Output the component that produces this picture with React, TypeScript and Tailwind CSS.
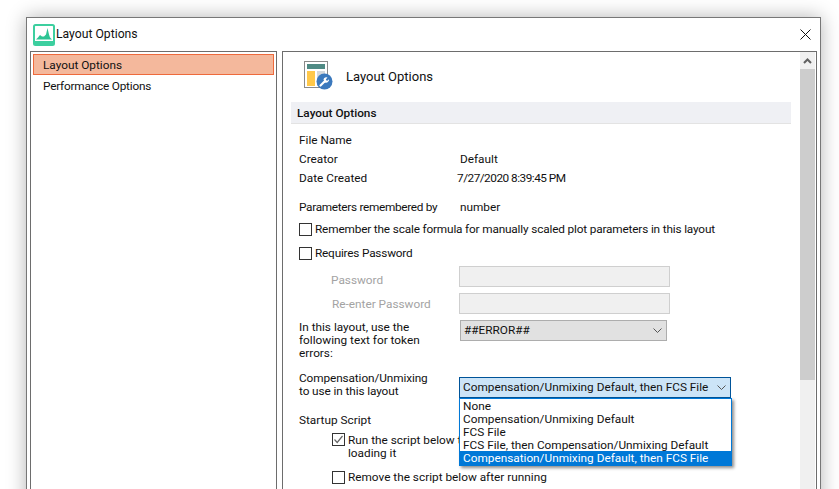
function Logo() {
  return (
    <svg width="22" height="22" viewBox="0 0 22 22" className="shrink-0">
      <rect x="1" y="1" width="20" height="20" rx="1.5" fill="#fff" stroke="#3ccf9f" strokeWidth="2" />
      <path d="M3 15.5 L5 13.5 L7 11 L9 12.5 L11 12.5 L13 10.5 L14.5 4 L16 10.5 L17 13.5 L19 15.5 Z" fill="#2cc493" />
      <rect x="2" y="17" width="18" height="3" fill="#3ccf9f" />
    </svg>
  );
}

function PageIcon() {
  return (
    <svg width="30" height="30" viewBox="0 0 30 30" className="shrink-0">
      <rect x="0.5" y="0.5" width="23" height="26" fill="#fff" stroke="#8a8a8a" />
      <rect x="3" y="3" width="18" height="5" fill="#4f8a84" />
      <rect x="3" y="10" width="8" height="15" fill="#ffc84a" />
      <rect x="13" y="10" width="8" height="15" fill="#d4d8dc" />
      <circle cx="20.5" cy="20.5" r="8" fill="#3b79bd" />
      <path d="M16.5 24.5 L20.5 20.5" fill="none" stroke="#fff" strokeWidth="2.2" strokeLinecap="round" />
      <path d="M19.5 18.5 A3 3 0 0 1 23.5 16.5 L21.8 18.6 L23 20 L25 18.2 A3 3 0 0 1 21 21.5 Z" fill="#fff" />
    </svg>
  );
}

function Chevron() {
  return (
    <svg width="9" height="5" viewBox="0 0 9 5" className="mr-[1px]">
      <path d="M0.5 0.5 L4.5 4.5 L8.5 0.5" fill="none" stroke="#555" strokeWidth="1" />
    </svg>
  );
}

function Checkbox({ checked }: { checked?: boolean }) {
  return (
    <span className="flex h-[13px] w-[13px] shrink-0 items-center justify-center border border-[#333] bg-white">
      {checked && (
        <svg width="11" height="11" viewBox="0 0 11 11">
          <path d="M1.5 5.5 L4.2 8.5 L9.5 2" fill="none" stroke="#666" strokeWidth="1.2" />
        </svg>
      )}
    </span>
  );
}

function Field({ label, labelClass, children }: { label: string; labelClass?: string; children?: React.ReactNode }) {
  return (
    <div className="flex h-[19px] items-center">
      <span className={`w-[161px] shrink-0 ${labelClass ?? ''}`}>{label}</span>
      {children}
    </div>
  );
}

function PasswordRow({ label, indent }: { label: string; indent: string }) {
  return (
    <div className="flex h-[21px] items-start">
      <span className={`w-[160px] shrink-0 text-[#a3a3a3] ${indent}`}>{label}</span>
      <div className="h-[21px] w-[211px] border border-[#cfcfcf] bg-[#f0f0f0]" />
    </div>
  );
}

const compOptions = [
  'None',
  'Compensation/Unmixing Default',
  'FCS File',
  'FCS File, then Compensation/Unmixing Default',
];

export default function App() {
  return (
    <div className="h-[489px] w-[839px] overflow-hidden bg-white pl-[26px] pt-[17px] font-['Roboto',sans-serif] text-[11.8px] leading-[13px] text-[#111]">
      <div className="h-[520px] w-[795px] border border-[#777] bg-white shadow-[0_0_18px_rgba(0,0,0,0.3)]">
        <div className="flex h-[33px] items-center pl-[6px] pr-[8px]">
          <Logo />
          <span className="ml-[1px] flex-1 text-[12.2px]">Layout Options</span>
          <svg width="11" height="11" viewBox="0 0 11 11" className="mr-[1px]">
            <path d="M0.5 0.5 L10.5 10.5 M10.5 0.5 L0.5 10.5" stroke="#111" strokeWidth="1" />
          </svg>
        </div>
        <div className="flex h-[480px] gap-[5px] pl-[3px]">
          <div className="w-[247px] border border-[#6d6d6d] p-[2px]">
            <div className="flex h-[21px] items-center border border-[#ee6a3c] bg-[#f4b89c] pl-[9px] pt-[1px]">Layout Options</div>
            <div className="flex h-[21px] items-center pl-[10px] pt-[1px] tracking-[-0.2px]">Performance Options</div>
          </div>
          <div className="flex w-[535px] border border-[#6d6d6d]">
            <div className="w-[516px] pl-[8px] pt-[9px]">
              <div className="flex h-[30px] items-center pl-[13px]">
                <PageIcon />
                <span className="ml-[12px] text-[13px]">Layout Options</span>
              </div>
              <div className="mt-[11px] flex h-[22px] w-[500px] items-center border-b border-[#e3e3e3] bg-[#eff0f4] pl-[6px] pt-[2px] font-medium">
                Layout Options
              </div>
              <div className="relative pl-[8px] pt-[7px]">
                <Field label="File Name" />
                <Field label="Creator"><span>Default</span></Field>
                <Field label="Date Created"><span className="-ml-[3px] tracking-[-0.5px]">7/27/2020 8:39:45 PM</span></Field>
                <div className="mt-[10px]">
                  <Field label="Parameters remembered by" labelClass="tracking-[-0.3px]"><span>number</span></Field>
                </div>
                <label className="mt-[1px] flex h-[22px] items-center gap-[3px]">
                  <Checkbox />
                  <span className="tracking-[-0.16px]">Remember the scale formula for manually scaled plot parameters in this layout</span>
                </label>
                <label className="mt-[2px] flex h-[22px] items-center gap-[3px]">
                  <Checkbox />
                  <span className="tracking-[-0.2px]">Requires Password</span>
                </label>
                <div className="mt-[2px] flex flex-col gap-[6px]">
                  <PasswordRow label="Password" indent="pl-[32px] pt-[8px]" />
                  <PasswordRow label="Re-enter Password" indent="pl-[33px] pt-[5px]" />
                </div>
                <div className="mt-[6px] flex items-start">
                  <span className="mt-[1px] w-[161px] shrink-0">In this layout, use the<br />following text for token<br />errors:</span>
                  <div className="flex h-[21px] w-[207px] items-center justify-between border border-[#adadad] bg-[#e1e1e1] pl-[3px] pr-[3px]">
                    <span>##ERROR##</span>
                    <Chevron />
                  </div>
                </div>
                <div className="mt-[17px] flex items-start">
                  <span className="-mt-[5px] w-[160px] shrink-0 tracking-[-0.1px]">Compensation/Unmixing<br />to use in this layout</span>
                  <div className="relative z-10 w-[272px]">
                    <div className="flex h-[21px] items-center justify-between border border-[#005499] bg-[#cce4f7] pl-[3px] pr-[3px]">
                      <span>Compensation/Unmixing Default, then FCS File</span>
                      <Chevron />
                    </div>
                    <div className="absolute left-0 top-[21px] w-[273px] border border-[#0078d7] bg-white leading-[15px] shadow-[2px_2px_3px_rgba(0,0,0,0.45)]">
                      {compOptions.map((o) => (
                        <div key={o} className="h-[13px] pl-[3px]">{o}</div>
                      ))}
                      <div className="h-[14px] bg-[#0078d7] pl-[3px] text-white">Compensation/Unmixing Default, then FCS File</div>
                    </div>
                  </div>
                </div>
                <div className="mt-[16px]">Startup Script</div>
                <label className="mt-[7px] flex items-start gap-[3px] pl-[33px]">
                  <span className="mt-[-1px]"><Checkbox checked /></span>
                  <span>Run the script below t<br />loading it</span>
                </label>
                <label className="mt-[11px] flex items-center gap-[3px] pl-[33px]">
                  <Checkbox />
                  <span>Remove the script below after running</span>
                </label>
              </div>
            </div>
            <div className="ml-[1px] flex w-[15px] flex-col bg-[#f0f0f0]">
              <div className="flex h-[17px] items-center justify-center">
                <svg width="9" height="6" viewBox="0 0 9 6"><path d="M1 5 L4.5 1.5 L8 5" fill="none" stroke="#606060" strokeWidth="2" /></svg>
              </div>
              <div className="h-[311px] bg-[#cdcdcd]" />
            </div>
          </div>
        </div>
      </div>
    </div>
  );
}
